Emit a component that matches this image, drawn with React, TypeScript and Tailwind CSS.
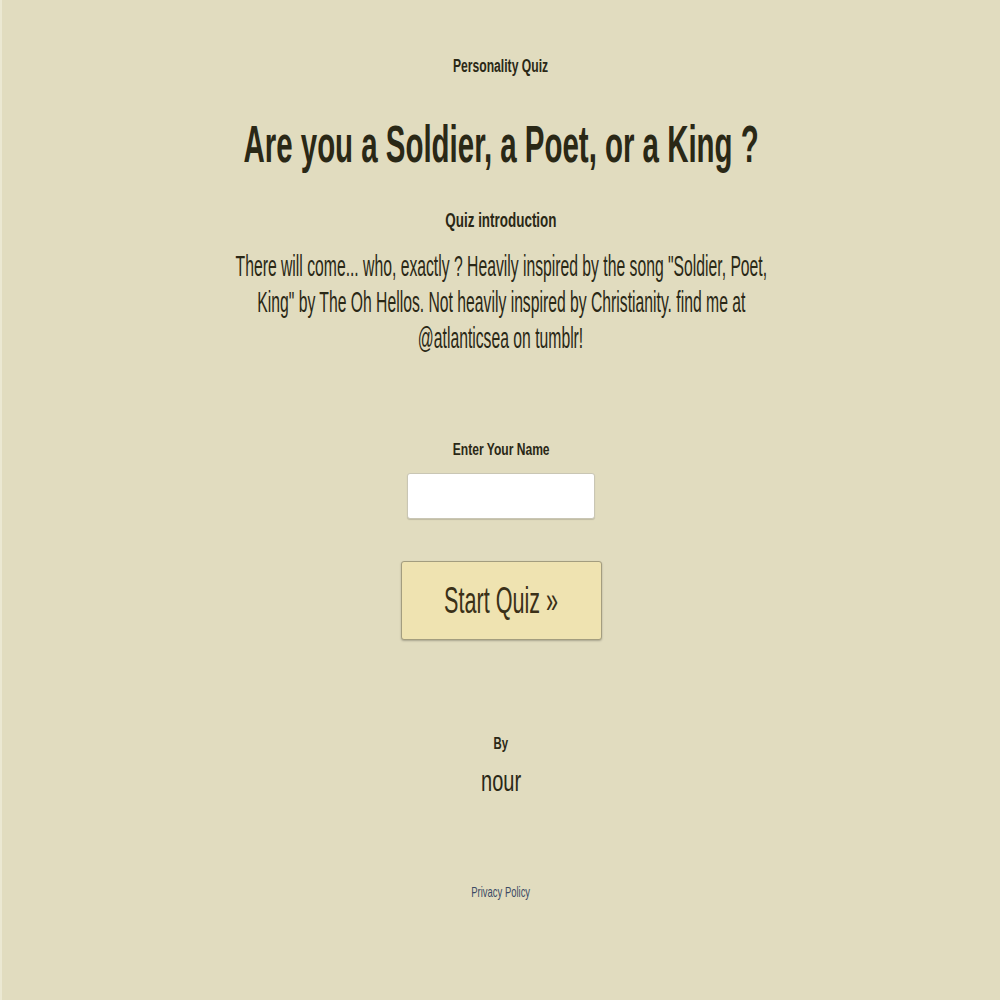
// Squeezed text: each line keeps its height and is narrowed with scale-x.
const line = "block whitespace-nowrap leading-none";

export default function App() {
  return (
    <div
      className="min-h-[1000px] w-full overflow-hidden bg-[#e1dcbf] border-l-2 border-[#ebe8d2] text-[#2a2816] text-center"
      style={{ fontFamily: '"Liberation Sans", Arial, sans-serif' }}
    >
      <div className="flex flex-col items-center pt-[57px]">
        <div className={`${line} h-[18px] text-[18px] font-bold`}>
          <span className="inline-block scale-x-[0.675]">Personality Quiz</span>
        </div>

        <h1 className={`${line} mt-[43px] h-[52px] text-[52px] font-bold`}>
          <span className="inline-block scale-x-[0.566]">Are you a Soldier, a Poet, or a King ?</span>
        </h1>

        <div className={`${line} mt-[39px] h-[21px] text-[21px] font-bold`}>
          <span className="inline-block scale-x-[0.64]">Quiz introduction</span>
        </div>

        <div className="mt-[18px] flex flex-col items-center text-[29px] leading-[36px] whitespace-nowrap">
          <span className="inline-block scale-x-[0.542]">There will come... who, exactly ? Heavily inspired by the song "Soldier, Poet,</span>
          <span className="inline-block scale-x-[0.542]">King" by The Oh Hellos. Not heavily inspired by Christianity. find me at</span>
          <span className="inline-block scale-x-[0.542]">@atlanticsea on tumblr!</span>
        </div>

        <div className={`${line} mt-[85px] h-[17px] text-[17px] font-bold`}>
          <span className="inline-block scale-x-[0.71]">Enter Your Name</span>
        </div>

        <input
          type="text"
          className="mt-[15px] h-[46px] w-[188px] rounded-[3px] border border-[#c9c6b4] bg-white shadow-[0_1px_1px_rgba(0,0,0,0.15)] outline-none"
        />

        <button
          type="button"
          className="mt-[42px] h-[79px] w-[201px] rounded-[3px] border border-[#a39d7f] bg-[#efe3b1] text-[36px] leading-none text-[#3a3018] shadow-[0_1px_2px_rgba(0,0,0,0.25)]"
        >
          <span className="inline-block scale-x-[0.6] whitespace-nowrap">Start Quiz »</span>
        </button>

        <div className={`${line} mt-[95px] h-[17px] text-[17px] font-bold`}>
          <span className="inline-block scale-x-[0.67]">By</span>
        </div>
        <div className={`${line} mt-[15px] h-[29px] text-[29px]`}>
          <span className="inline-block scale-x-[0.69]">nour</span>
        </div>

        <a href="#" className={`${line} mt-[88px] h-[15px] text-[15px] text-[#3c4a64]`}>
          <span className="inline-block scale-x-[0.63]">Privacy Policy</span>
        </a>
      </div>
    </div>
  );
}
